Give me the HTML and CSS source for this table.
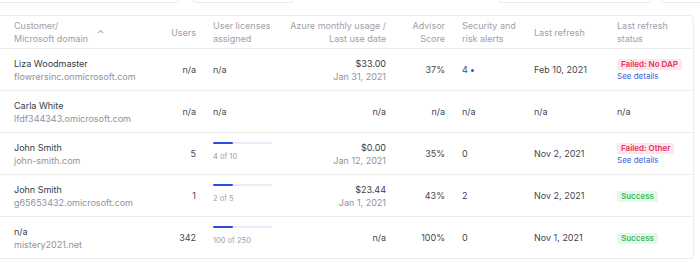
FILE: index.html
```html
<!DOCTYPE html>
<html lang="en">
<head>
<meta charset="utf-8">
<title>Customers</title>
<link rel="stylesheet" href="styles.css">
</head>
<body>
<div class="toolbar">
  <div class="field f1"></div>
  <div class="field f2"></div>
  <div class="spacer"></div>
  <div class="field f3"></div>
  <div class="field f4"></div>
</div>
<div class="card">
  <div class="row head">
    <div class="cell c1"><span>Customer/<br>Microsoft domain</span><span class="caret">&#8963;</span></div>
    <div class="cell c2 right">Users</div>
    <div class="cell c3">User licenses<br>assigned</div>
    <div class="cell c4 stack"><span>Azure monthly usage /</span><span>Last use date</span></div>
    <div class="cell c5 right">Advisor<br>Score</div>
    <div class="cell c6">Security and<br>risk alerts</div>
    <div class="cell c7">Last refresh</div>
    <div class="cell c8">Last refresh<br>status</div>
  </div>

  <div class="row">
    <div class="cell c1"><div class="name">Liza Woodmaster</div><div class="sub">flowrersinc.onmicrosoft.com</div></div>
    <div class="cell c2 right">n/a</div>
    <div class="cell c3">n/a</div>
    <div class="cell c4 right"><div class="name">$33.00</div><div class="sub">Jan 31, 2021</div></div>
    <div class="cell c5 right">37%</div>
    <div class="cell c6">4 <span class="dot"></span></div>
    <div class="cell c7">Feb 10, 2021</div>
    <div class="cell c8"><span class="badge fail">Failed: No DAP</span><a class="link">See details</a></div>
  </div>

  <div class="row">
    <div class="cell c1"><div class="name">Carla White</div><div class="sub">lfdf344343.omicrosoft.com</div></div>
    <div class="cell c2 right">n/a</div>
    <div class="cell c3">n/a</div>
    <div class="cell c4 right">n/a</div>
    <div class="cell c5 right">n/a</div>
    <div class="cell c6">n/a</div>
    <div class="cell c7">n/a</div>
    <div class="cell c8">n/a</div>
  </div>

  <div class="row">
    <div class="cell c1"><div class="name">John Smith</div><div class="sub">john-smith.com</div></div>
    <div class="cell c2 right">5</div>
    <div class="cell c3"><div class="bar"><div class="fill"></div></div><div class="cap">4 of 10</div></div>
    <div class="cell c4 right"><div class="name">$0.00</div><div class="sub">Jan 12, 2021</div></div>
    <div class="cell c5 right">35%</div>
    <div class="cell c6">0</div>
    <div class="cell c7">Nov 2, 2021</div>
    <div class="cell c8"><span class="badge fail">Failed: Other</span><a class="link">See details</a></div>
  </div>

  <div class="row">
    <div class="cell c1"><div class="name">John Smith</div><div class="sub">g65653432.omicrosoft.com</div></div>
    <div class="cell c2 right">1</div>
    <div class="cell c3"><div class="bar"><div class="fill"></div></div><div class="cap">2 of 5</div></div>
    <div class="cell c4 right"><div class="name">$23.44</div><div class="sub">Jan 1, 2021</div></div>
    <div class="cell c5 right">43%</div>
    <div class="cell c6">2</div>
    <div class="cell c7">Nov 2, 2021</div>
    <div class="cell c8"><span class="badge ok">Success</span></div>
  </div>

  <div class="row last">
    <div class="cell c1"><div class="name">n/a</div><div class="sub">mistery2021.net</div></div>
    <div class="cell c2 right">342</div>
    <div class="cell c3"><div class="bar"><div class="fill"></div></div><div class="cap">100 of 250</div></div>
    <div class="cell c4 right">n/a</div>
    <div class="cell c5 right">100%</div>
    <div class="cell c6">0</div>
    <div class="cell c7">Nov 1, 2021</div>
    <div class="cell c8"><span class="badge ok">Success</span></div>
  </div>
</div>
</body>
</html>
```

FILE: styles.css
```css
html, body {
  margin: 0;
  padding: 0;
  background: #ffffff;
  overflow: hidden;
}
body {
  font-family: Inter, "Noto Sans", sans-serif;
  font-size: 9px;
  color: #45454f;
  width: 700px;
  height: 262px;
}
.toolbar {
  display: flex;
  height: 30px;
  margin-top: -27px;
  margin-left: -20px;
  width: 740px;
}
.field {
  border: 1px solid #ececec;
  border-radius: 4px;
  box-sizing: border-box;
  height: 30px;
}
.f1 { width: 200px; }
.f2 { width: 102px; margin-left: 12px; }
.spacer { width: 204px; }
.f3 { width: 155px; }
.f4 { width: 60px; margin-left: 7px; }

.card {
  margin-top: 12px;
  margin-left: -6px;
  width: 700px;
  box-sizing: border-box;
  border: 1px solid #ececec;
  border-radius: 4px;
}
.row {
  display: grid;
  grid-template-columns: 155px 46px 110px 80px 59px 72px 83px 1fr;
  height: 42px;
  box-sizing: border-box;
  border-bottom: 1px solid #ededed;
  align-items: center;
}
.row.head {
  height: 33px;
  color: #a0a0a8;
  line-height: 13px;
}
.row.last { border-bottom: none; height: 41px; }
.cell { line-height: 13px; }
.right { text-align: right; }
.stack {
  display: flex;
  flex-direction: column;
  align-items: flex-end;
  white-space: nowrap;
}
.c1 { padding-left: 19px; }
.c3, .c6, .c7, .c8 { padding-left: 17px; }
.row.head .c1 { display: flex; align-items: center; }
.caret {
  margin-left: 9px;
  font-size: 9px;
  color: #8a8a92;
  position: relative;
  top: 1px;
}
.name { color: #3a3a44; }
.sub { color: #92929a; }
.dot {
  display: inline-block;
  width: 3px;
  height: 3px;
  border-radius: 50%;
  background: #3355e6;
  vertical-align: middle;
  margin-left: 1px;
}
.bar {
  width: 59px;
  height: 2px;
  background: #e9edfb;
  border-radius: 1px;
  margin-bottom: 8px;
  margin-top: -4px;
}
.fill {
  width: 20px;
  height: 2px;
  background: #2d4de0;
  border-radius: 1px;
}
.cap { color: #a0a0a8; font-size: 7.5px; line-height: 10px; }
.badge {
  display: inline-block;
  font-size: 8px;
  font-weight: 600;
  line-height: 11px;
  padding: 0 4px;
  border-radius: 2px;
}
.fail { background: #fde6ec; color: #ea2f63; }
.ok { background: #e5f8e9; color: #3dbd5c; }
.link {
  display: block;
  color: #3b5fe3;
  font-size: 8px;
  line-height: 12px;
}
```
